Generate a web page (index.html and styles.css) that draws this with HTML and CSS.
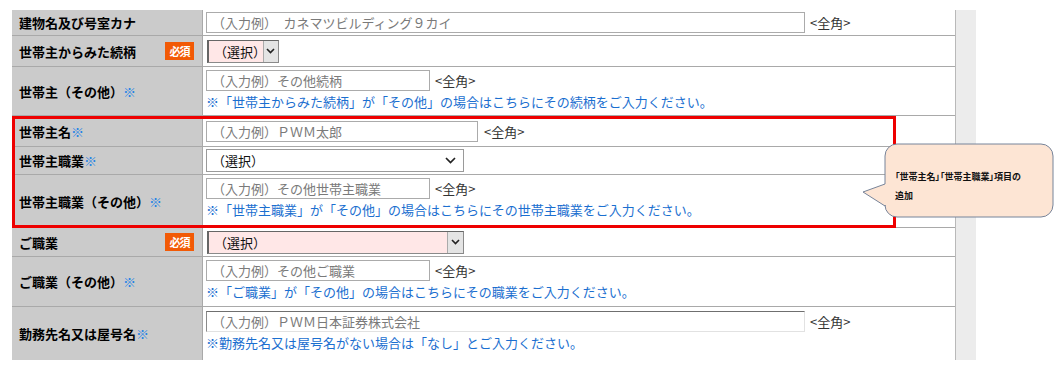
FILE: index.html
```html
<!DOCTYPE html>
<html lang="ja">
<head>
  <meta charset="UTF-8">
  <title>登録内容の入力</title>
  <link rel="stylesheet" href="styles.css">
</head>
<body>
  <div class="page">
    <div class="form">
      <div class="row h26">
        <div class="label">建物名及び号室カナ</div>
        <div class="field">
          <div class="input wide">（入力例）　カネマツビルディング９カイ</div>
          <span class="unit">&lt;全角&gt;</span>
        </div>
      </div>
      <div class="row h31">
        <div class="label">世帯主からみた続柄 <span class="req">必須</span></div>
        <div class="field">
          <div class="select pink small"><span>（選択）</span><span class="btn"><svg width="9" height="6" viewBox="0 0 9 6"><path d="M1 1l3.5 3.5L8 1" fill="none" stroke="#222" stroke-width="1.6"/></svg></span></div>
        </div>
      </div>
      <div class="row h49">
        <div class="label">世帯主（その他）<span class="mark">※</span></div>
        <div class="field two">
          <div class="line">
            <div class="input mid">（入力例）その他続柄</div>
            <span class="unit">&lt;全角&gt;</span>
          </div>
          <div class="note">※「世帯主からみた続柄」が「その他」の場合はこちらにその続柄をご入力ください。</div>
        </div>
      </div>
      <div class="row h31">
        <div class="label">世帯主名<span class="mark">※</span></div>
        <div class="field">
          <div class="input name">（入力例）ＰＷＭ太郎</div>
          <span class="unit gap">&lt;全角&gt;</span>
        </div>
      </div>
      <div class="row h28">
        <div class="label">世帯主職業<span class="mark">※</span></div>
        <div class="field">
          <div class="select long"><span>（選択）</span><svg class="chev" width="11" height="7" viewBox="0 0 11 7"><path d="M1 1l4.5 4.5L10 1" fill="none" stroke="#222" stroke-width="1.7"/></svg></div>
        </div>
      </div>
      <div class="row h53">
        <div class="label">世帯主職業（その他）<span class="mark">※</span></div>
        <div class="field two">
          <div class="line">
            <div class="input mid">（入力例）その他世帯主職業</div>
            <span class="unit">&lt;全角&gt;</span>
          </div>
          <div class="note">※「世帯主職業」が「その他」の場合はこちらにその世帯主職業をご入力ください。</div>
        </div>
      </div>
      <div class="row h29">
        <div class="label">ご職業 <span class="req">必須</span></div>
        <div class="field">
          <div class="select pink long"><span>（選択）</span><span class="btn"><svg width="9" height="6" viewBox="0 0 9 6"><path d="M1 1l3.5 3.5L8 1" fill="none" stroke="#222" stroke-width="1.6"/></svg></span></div>
        </div>
      </div>
      <div class="row h50">
        <div class="label">ご職業（その他）<span class="mark">※</span></div>
        <div class="field two">
          <div class="line">
            <div class="input mid">（入力例）その他ご職業</div>
            <span class="unit">&lt;全角&gt;</span>
          </div>
          <div class="note">※「ご職業」が「その他」の場合はこちらにその職業をご入力ください。</div>
        </div>
      </div>
      <div class="row h53 last">
        <div class="label">勤務先名又は屋号名<span class="mark">※</span></div>
        <div class="field two low">
          <div class="line">
            <div class="input wide inset">（入力例）ＰＷＭ日本証券株式会社</div>
            <span class="unit">&lt;全角&gt;</span>
          </div>
          <div class="note">※勤務先名又は屋号名がない場合は「なし」とご入力ください。</div>
        </div>
      </div>
    </div>
    <div class="side"></div>

    <div class="highlight"></div>
    <div class="callout">
      <svg width="193" height="76" viewBox="0 0 193 76">
        <path d="M35 1H179A12 12 0 0 1 191 13V62A12 12 0 0 1 179 74H35A12 12 0 0 1 23 62V63L1 49L23 41V13A12 12 0 0 1 35 1Z" fill="#fde5d4" stroke="#77849a" stroke-width="1"/>
      </svg>
      <div class="callout-text">「世帯主名」「世帯主職業」項目の<br>追加</div>
    </div>
  </div>
</body>
</html>
```

FILE: styles.css
```css
body {
  margin: 0;
  background: #fff;
  font-family: "Noto Sans CJK JP", "Noto Sans", sans-serif;
  font-size: 13px;
  color: #000;
}

.page {
  position: relative;
  display: flex;
  padding: 10px 0 8px 12px;
}

.form {
  width: 943px;
  display: flex;
  flex-direction: column;
}

.side {
  width: 21px;
  background: #ececec;
  border-left: 1px solid #b9b9b9;
  box-sizing: border-box;
}

.row {
  display: flex;
  box-sizing: border-box;
  border-bottom: 1px solid #a9a9a9;
}

.row.last {
  border-bottom: none;
}

.h26 { height: 26px; }
.h28 { height: 28px; }
.h29 { height: 29px; }
.h31 { height: 31px; }
.h49 { height: 49px; }
.h50 { height: 50px; }
.h53 { height: 53px; }

.label {
  width: 191px;
  flex-shrink: 0;
  box-sizing: border-box;
  background: #cbcbcb;
  border-right: 1px solid #a9a9a9;
  padding: 0 8px 0 7px;
  display: flex;
  align-items: center;
  justify-content: space-between;
  font-weight: bold;
  white-space: nowrap;
}

.label .mark {
  color: #1f84e6;
  margin-right: auto;
}

.req {
  background: #f25a06;
  color: #fff;
  font-size: 11px;
  width: 29px;
  height: 18px;
  line-height: 18px;
  text-align: center;
  letter-spacing: -1px;
}

.field {
  flex: 1;
  display: flex;
  align-items: center;
  padding-left: 3px;
  background: #fff;
}

.field.two {
  flex-direction: column;
  align-items: flex-start;
  padding-top: 3px;
}

.field.low {
  padding-top: 4px;
}

.line {
  display: flex;
  align-items: center;
}

.input {
  height: 21px;
  box-sizing: border-box;
  border: 1px solid #ababab;
  color: #7a7a7a;
  line-height: 19px;
  padding-left: 5px;
  white-space: nowrap;
  overflow: hidden;
}

.input.wide { width: 599px; }
.input.mid { width: 224px; }
.input.name { width: 272px; }

.input.inset {
  border-top-color: #6f6f6f;
  border-left-color: #8a8a8a;
  border-right-color: #e2e2e2;
  border-bottom-color: #e2e2e2;
}

.unit {
  color: #333;
  margin-left: 5px;
}

.unit.gap {
  margin-left: 6px;
}

.select {
  height: 23px;
  box-sizing: border-box;
  border: 1px solid #9a9a9a;
  display: flex;
  align-items: center;
  justify-content: space-between;
  padding-left: 5px;
  color: #111;
}

.select.small { width: 72px; margin-left: 1px; }
.select.long { width: 258px; }

.select.pink {
  background: #ffe7e7;
  border-color: #8a8a8a;
  border-left: 2px solid #666;
  border-top: 1px solid #666;
}

.select.pink.long { width: 257px; margin-left: 1px; }

.select .chev {
  margin-right: 7px;
}

.btn {
  width: 15px;
  height: 100%;
  background: #e4e4e4;
  border-left: 1px solid #aaa;
  display: flex;
  align-items: center;
  justify-content: center;
}

.note {
  color: #1b6fd0;
  line-height: 20px;
  margin-top: 1px;
  white-space: nowrap;
}

.highlight {
  position: absolute;
  left: 12px;
  top: 116px;
  width: 884px;
  height: 112px;
  box-sizing: border-box;
  border: 3px solid #ee0000;
}

.callout {
  position: absolute;
  left: 862px;
  top: 143px;
  width: 193px;
  height: 76px;
}

.callout svg {
  display: block;
}

.callout-text {
  position: absolute;
  left: 33px;
  top: 24px;
  font-size: 9px;
  font-weight: bold;
  font-feature-settings: "palt";
  line-height: 19px;
  color: #111;
  white-space: nowrap;
}
```
